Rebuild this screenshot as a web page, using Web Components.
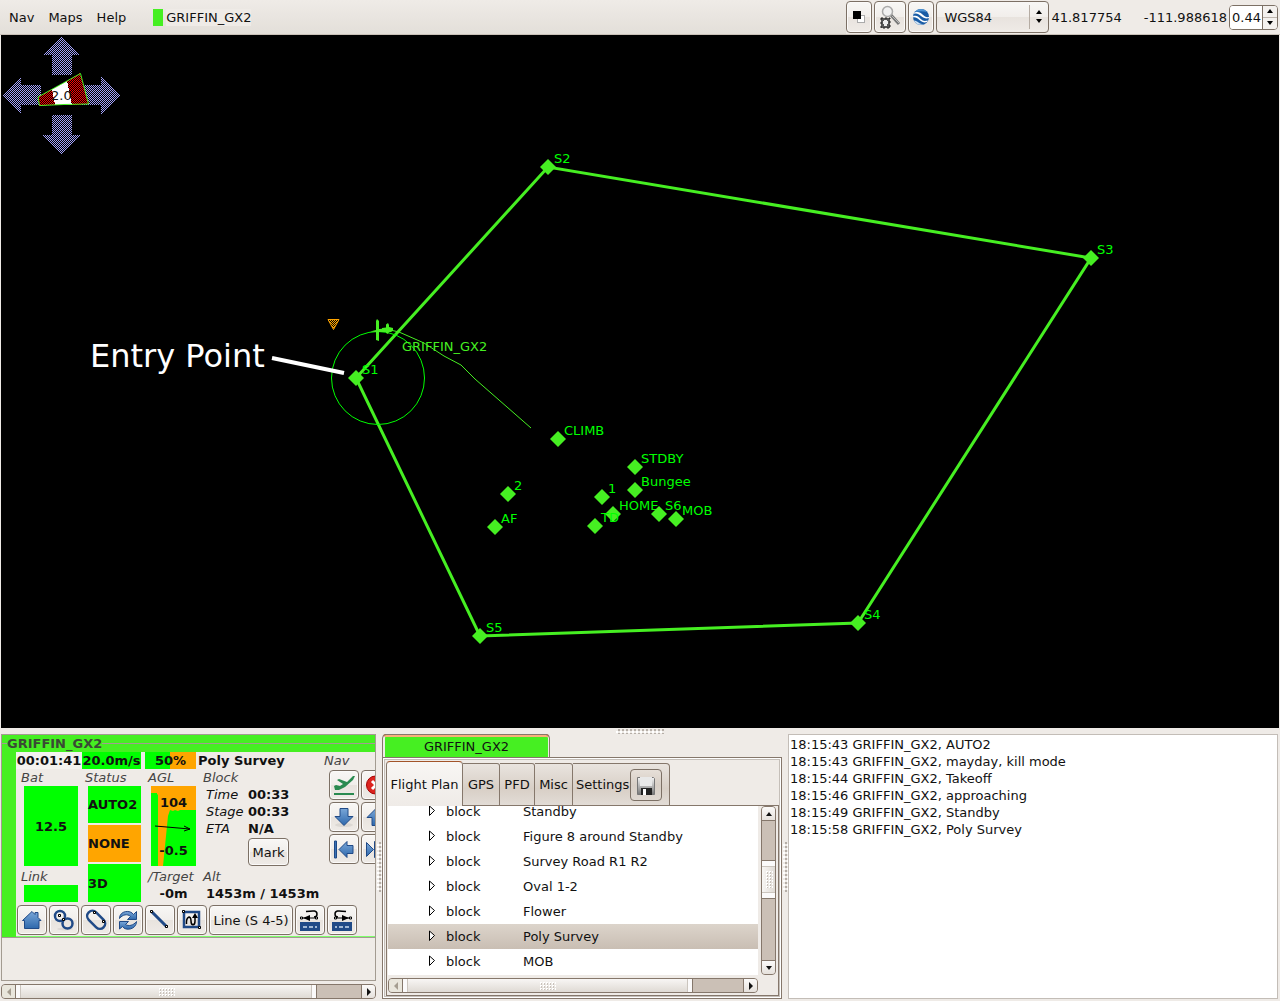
<!DOCTYPE html>
<html lang="en">
<head>
<meta charset="utf-8">
<title>GCS</title>
<style>
html,body{margin:0;height:100%}
body{background:#efebe7;color:#111;font:13px/17px "DejaVu Sans",sans-serif}
</style>
</head>
<body>
<gcs-app></gcs-app>
<script>
const define = (name, html, setup) => customElements.define(name, class extends HTMLElement {
  connectedCallback() {
    if (this.shadowRoot) return;
    const t = document.createElement('template');
    t.innerHTML = html;
    this.attachShadow({mode: 'open'}).append(t.content.cloneNode(true));
    if (setup) setup(this, this.shadowRoot);
  }
});

/* ---------- icons ---------- */
const grad = '<defs><linearGradient id="b" x1="0" y1="0" x2="0" y2="1"><stop offset="0" stop-color="#7aa7d8"/><stop offset="1" stop-color="#2e68ac"/></linearGradient><linearGradient id="m" x1="0" y1="0" x2="0" y2="1"><stop offset="0" stop-color="#f4f4f4"/><stop offset="1" stop-color="#777"/></linearGradient></defs>';
const icons = {
  editor: '<rect x="10.500" y="10.500" width="7" height="7" fill="#fff" stroke="#aaa"/><rect x="6" y="6" width="8" height="8"/>',
  search: '<path d="M13 10l8 9" stroke="#777" stroke-width="3"/><path d="M14 11l7 7" stroke="#bbb"/><circle cx="9.500" cy="6.500" r="5" fill="#f1f1f1" stroke="#aaa" stroke-width="1.500"/><path d="M3 13h9v10h-9z" fill="#555"/><path d="M6 15h3v1h1v3h-1v2h-3v-2h-1v-3h1z" fill="#eee"/><path d="M3 13h9v10h-9z" fill="none" stroke="#222" stroke-dasharray="2 2"/>',
  earth: '<circle cx="12" cy="12" r="8" fill="#1a5ca5"/><path d="M6 7c3-4 9-4 12 0-4-1-8-1-12 0z" fill="#4f94d4"/><path d="M5.500 7.500c4-1 6 0 8 2s4 3 6.500 2.500v1c-3 1-5.500 0-8-2s-4-3-7.500-2z" fill="#fff"/><path d="M4.200 11c4-1 5.500 1 7.500 3s4 2.500 7 1.500l-.7 1.500c-3 1-5 0-7.500-2s-4-3-6.500-2.500z" fill="#fff"/><path d="M5 15.500c2 0 3 1 4.500 2s3 1.500 5 1.500c-4 2-8 0-9.500-3.500z" fill="#cfe3f5"/>',
  takeoff: '<path d="M2 13l2-1 4 1 3-2-6-4 2-1 8 3 6-6 2 0-2 4-8 7-6 3h-4z" fill="#2a8a50"/><path d="M2 21h20" stroke="#2a8a50" stroke-width="2"/>',
  kill: '<circle cx="11.500" cy="12" r="9" fill="#dc241f" stroke="#a40000"/><path d="M8 8l8 8M16 8l-8 8" stroke="#fff" stroke-width="3"/>',
  down: grad + '<ellipse cx="12" cy="20" rx="9" ry="2" fill="#0001"/><path d="M8 3.500h8v8h5l-9 9-9-9h5z" fill="url(#b)" stroke="#204a87"/>',
  up: grad + '<path d="M8 20.500h8v-8h5l-9-9-9 9h5z" fill="url(#b)" stroke="#204a87"/>',
  first: grad + '<path d="M2.500 4h2v17h-2z" fill="#3a72b4" stroke="#204a87"/><path d="M7 12.500l8-8v4h6v8h-6v4z" fill="url(#b)" stroke="#204a87"/>',
  last: grad + '<path d="M9.500 12.500l-7-7v14z" fill="url(#b)" stroke="#204a87"/><path d="M10.500 4.500h2v16h-2z" fill="#3a72b4" stroke="#204a87"/>',
  home: grad + '<path d="M4.500 20.500v-8h-2l9.500-9 3 3v-2h3v5l3 3h-2v8z" fill="url(#b)" stroke="#204a87"/>',
  eight: '<ellipse cx="13" cy="21" rx="8" ry="1.500" fill="#0001"/><circle cx="8" cy="8" r="5" fill="none" stroke="#204a87" stroke-width="2.500"/><circle cx="15.500" cy="15.500" r="5" fill="none" stroke="#204a87" stroke-width="2.500"/><path d="M6.500 6.500h2v2h-2zM10.500 10.500h2v2h-2z" fill="#fff" stroke="#000"/>',
  oval: '<rect x="1.500" y="6.500" width="21" height="10.500" rx="5.200" transform="rotate(45 12 12)" fill="none" stroke="#204a87" stroke-width="2.500"/><path d="M9.500 3.500h2v2h-2zM18.500 12.500h2v2h-2z" fill="#fff" stroke="#000"/>',
  turn: grad + '<path d="M3.500 10.500c0-8 11-9 14-4l3-3v8h-9l3-3c-3-3-8-2-11 2z" fill="url(#b)" stroke="#204a87"/><path d="M20.500 13.500c0 8-11 10-14 5l-3 2.500v-7.500h9l-3 3c3 2 8 1 11-3z" fill="url(#b)" stroke="#204a87"/>',
  line: '<path d="M4 4l15 15" stroke="#204a87" stroke-width="3"/><path d="M2.500 2.500h2v2h-2zM17.500 17.500h2v2h-2z" fill="#fff" stroke="#000"/>',
  survey: '<path d="M4 4h15v15h-15z" fill="none" stroke="#204a87" stroke-width="2.500"/><path d="M6.500 16c-.5-8 4.500-9 4.500-3 0 5 4 5 4 0v-4" fill="none" stroke="#000" stroke-width="1.500"/><path d="M12 10l3-5 3 5z"/><path d="M2.500 2.500h2v2h-2zM18.500 18.500h2v2h-2z" fill="#fff" stroke="#000"/>',
  left: '<path d="M2 14h20v9h-20z" fill="#204a87"/><path d="M5 19h14" stroke="#cde" stroke-width="1.500" stroke-dasharray="4 2"/><path d="M8 3.500c8-1 11-1 11 2.500 0 2-1 3-3 3" fill="none" stroke="#000" stroke-width="1.500"/><path d="M4 10h14" stroke="#000"/><path d="M12 7v6l-7-3z"/><path d="M2.500 9h2v2h-2zM17.500 9h2v2h-2z" fill="#fff" stroke="#000"/>',
  floppy: grad + '<path d="M3.500 4.500h16l1 1v16h-17z" fill="url(#m)" stroke="#777"/><path d="M6 4h12v9h-12z" fill="#e8e8e8"/><path d="M7 15h11v7h-11z" fill="#222"/><path d="M9 16h3v6h-3z" fill="#fff"/>'
};
icons.right = '<g transform="translate(24 0) scale(-1 1)">' + icons.left + '</g>';

define('tool-icon', `<style>:host{display:block;width:24px;height:24px;flex:none}svg{display:block}</style><svg width="24" height="24" viewBox="0 0 24 24"></svg>`,
  (h, r) => r.querySelector('svg').innerHTML = icons[h.getAttribute('name')] || '');

define('tool-button', `<style>
:host{display:flex;min-width:30px;height:30px;flex:none}
button{flex:1;display:flex;align-items:center;justify-content:center;min-width:0;padding:0;box-sizing:border-box;border:1px solid #7c7065;border-radius:4px;
 background:linear-gradient(#f8f7f5,#f1eeeb 50%,#e8e3de 51%,#efebe7);box-shadow:inset 0 0 0 1px #fbfaf9;font:inherit;color:inherit;white-space:nowrap}
:host([flat]) button{background:linear-gradient(#e6dfd8,#d8cfc6 50%,#dfd8d1);box-shadow:none}
</style><button><slot></slot></button>`, (h, r) => {
  const n = h.getAttribute('icon');
  if (n) { r.querySelector('button').innerHTML = `<tool-icon name="${n}"></tool-icon>`; r.querySelector('button').setAttribute('aria-label', n); }
});

define('dot-grip', `<style>:host{display:block;width:48px;height:5px;flex:none;background:conic-gradient(#b5aea7 25%,#fff0 0 50%,#fff 0 75%,#fff0 0) 0 0/4px 4px}
:host([vertical]){width:5px;height:50px}:host([small]){width:17px;height:8px;background:conic-gradient(#fff 25%,#c9c2bb 0 50%,#fff0 0) 0 0/3px 3px}
:host([small][vertical]){width:8px;height:17px}</style>`);

define('scroll-bar', `<style>
:host{display:flex;height:15px;box-sizing:border-box;border:1px solid #85776b;border-radius:4px;background:#cbc0b6;overflow:hidden;flex:none}
:host([vertical]){flex-direction:column;height:auto;width:15px}
button{flex:none;width:14px;height:100%;border:0;border-right:1px solid #85776b;padding:0;background:linear-gradient(#fbfaf9,#e6e1dc);color:#111;display:grid;place-items:center}
button.e{border-right:0;border-left:1px solid #85776b}
:host([vertical]) button{width:100%;height:14px;border:0;border-bottom:1px solid #85776b}
:host([vertical]) button.e{border:0;border-top:1px solid #85776b}
:host(:not([vertical])) button:not(.e){background:#e9e6dc;color:#a59d90}
.t{display:grid;place-items:center;background:linear-gradient(#f8f6f4,#dfdad4);border-right:1px solid #85776b;box-shadow:inset 4px 0 #fbfafa,inset 5px 0 #cbc5be,inset -4px 0 #fbfafa,inset -5px 0 #cbc5be}
:host([vertical]) .t{background:linear-gradient(90deg,#f8f6f4,#dfdad4);border:solid #85776b;border-width:1px 0;box-shadow:inset 0 5px #fbfafa,inset 0 6px #cbc5be,inset 0 -5px #fbfafa,inset 0 -6px #cbc5be}
svg{display:block;fill:currentColor}
</style><button aria-label="back"><svg width="8" height="8"></svg></button><div class="a"></div><div class="t"><dot-grip small></dot-grip></div><div class="b"></div><button class="e" aria-label="forward"><svg width="8" height="8"></svg></button>`, (h, r) => {
  const v = h.hasAttribute('vertical');
  const p = v ? ['M1 6l3-4 3 4z', 'M1 2l3 4 3-4z'] : ['M6 0l-4 4 4 4z', 'M2 0l4 4-4 4z'];
  r.querySelectorAll('svg').forEach((s, i) => s.innerHTML = `<path d="${p[i]}"/>`);
  if (v) r.querySelector('dot-grip').setAttribute('vertical', '');
  const [a, t, b] = h.getAttribute('parts').split(' ');
  r.querySelector('.a').style.flex = a + ' 1 0'; r.querySelector('.t').style.flex = t + ' 1 0'; r.querySelector('.b').style.flex = b + ' 1 0';
});

/* ---------- menu bar ---------- */
define('menu-bar', `<style>
:host{display:flex;height:35px;box-sizing:border-box;background:linear-gradient(#efebe7,#e3dfd9);border-bottom:1px solid #c9c1b8;align-items:center;white-space:nowrap}
nav{display:flex;gap:14px;padding-left:9px;flex:1;align-items:center}
a{color:inherit;text-decoration:none}
.ac{display:flex;align-items:center;gap:3px;margin-left:13px}.ac i{width:10px;height:17px;background:#46ef22}
.ac span{background:#efebe7}
.tools{display:flex;align-items:center;align-self:stretch;background:#efebe7;gap:2px;padding-right:2px}
tool-button{height:32px}.n{min-width:26px}.w{min-width:32px}
label{display:grid;width:113px;height:32px;align-items:center}
label>*{grid-area:1/1}
select{appearance:none;width:100%;height:32px;border:1px solid #7c7065;border-radius:4px;background:linear-gradient(#f8f7f5,#f1eeeb 50%,#e8e3de 51%,#efebe7);padding:0 7px;font:inherit;color:inherit}
label svg{justify-self:end;pointer-events:none}
.c{display:flex;gap:22px}
.spin{display:flex;width:49px;height:25px;box-sizing:border-box;border:1px solid #7c7065;border-radius:4px;overflow:hidden;background:#fff}
.spin input{flex:1;min-width:0;border:0;padding:0 0 0 2px;font:inherit;color:inherit;background:#fff}
.spin div{width:14px;display:flex;flex-direction:column;border-left:1px solid #7c7065;background:#f4f1ee}
.spin button{flex:1;border:0;padding:0;background:none;display:grid;place-items:center}.spin button+button{border-top:1px solid #bdb5ad}
</style>
<nav><a href="#nav">Nav</a><a href="#maps">Maps</a><a href="#help">Help</a><div class="ac"><i></i><span>GRIFFIN_GX2</span></div></nav>
<div class="tools"><tool-button class="n" icon="editor"></tool-button><tool-button class="w" icon="search"></tool-button><tool-button class="n" icon="earth"></tool-button>
<label><select aria-label="Datum"><option>WGS84</option></select><svg width="20" height="24"><path d="M.5 0v24" stroke="#b5aca3"/><path d="M7 9l3-4 3 4zM7 14l3 4 3-4z"/></svg></label>
<div class="c"><span>41.817754</span><span>-111.988618</span></div>
<div class="spin"><input aria-label="Zoom" value="0.44"><div><button aria-label="more"><svg width="8" height="5"><path d="M1 4l3-4 3 4z"/></svg></button><button aria-label="less"><svg width="8" height="5"><path d="M1 0l3 4 3-4z"/></svg></button></div></div></div>`);

/* ---------- map ---------- */
define('way-point', `<style>:host{position:absolute;display:block;color:#0f0;white-space:nowrap}
svg{position:absolute;left:-8px;top:-8px}span{position:absolute;left:6px;top:-17px}</style>
<svg width="16" height="16"><path d="M8 0l8 8-8 8-8-8z" fill="#46ef22"/></svg><span><slot></slot></span>`, h => {
  h.style.left = h.getAttribute('x') + 'px'; h.style.top = h.getAttribute('y') + 'px';
});
define('map-canvas', `<style>:host{display:block;position:relative;flex:1;min-height:0;margin:0 1px;background:#000;overflow:hidden}
svg.m{position:absolute;left:0;top:0;width:100%;height:100%}</style>
<svg class="m" font-size="13"><defs>
<pattern id="blue" width="2" height="2" patternUnits="userSpaceOnUse"><path d="M0 0h1v1h-1zM1 1h1v1h-1z" fill="#a0a0f8"/></pattern>
<pattern id="red" width="2" height="2" patternUnits="userSpaceOnUse"><path d="M0 0h2v2h-2z" fill="#000"/><path d="M0 0h1v1h-1zM1 1h1v1h-1z" fill="#f00"/></pattern>
<pattern id="org" width="2" height="2" patternUnits="userSpaceOnUse"><path d="M0 0h1v1h-1zM1 1h1v1h-1z" fill="#ffa500"/></pattern></defs>
<g transform="translate(-1 -35)">
<g fill="url(#blue)" shape-rendering="crispEdges"><path d="M61.500 36l19 19h-9v20h-20v-20h-9z"/><path d="M61.500 155l20-20h-10v-20h-20v20h-10z"/><path d="M2 95l19-19v9h20v20h-20v9z"/><path d="M121 95l-20-19v9h-20v20h20v10z"/></g>
<g shape-rendering="crispEdges"><path d="M38 97L80 73L89 104L39 106z" fill="#000"/><path d="M38 97L52 89L55 105L39 106zM67 81L80 73L89 104L72 105z" fill="url(#red)"/><path d="M52 89L67 81L72 105L55 105z" fill="#fff"/></g>
<path d="M38 97L80.500 73.500L88.500 104L64 104.500L39.500 105.500z" fill="none" stroke="#46ef22"/><text x="51" y="100" fill="#111">2.0</text>
<path d="M328 319.500h11l-5.500 10z" fill="url(#org)" stroke="#ffa500"/>
<path d="M356 378L548 167L1091 258L858 623L480 636z" fill="none" stroke="#46ef22" stroke-width="3"/>
<circle cx="378" cy="378" r="46.500" fill="none" stroke="#0f0"/>
<path d="M386 329L399 332L424 343L444 356L461 365L475 379L531 428" fill="none" stroke="#46ef22"/>
<path d="M370 331.500l6-1.500v-9l1-2 2 2v8l12-1 2 2-2 2h-12v9l-3-1v-8z" fill="#46ef22"/><path d="M382 328l4-.5v-3l2-1.500 1 2v2l4 1v3l-4 1-1 2-2-1v-3l-4-.5z" fill="#46ef22"/>
<text x="402" y="351" fill="#46ef22">GRIFFIN_GX2</text>
<text x="90" y="367" fill="#fff" font-size="32">Entry Point</text><path d="M272 358L344 373" stroke="#fff" stroke-width="4"/></g></svg>
<way-point x="355" y="343">S1</way-point><way-point x="547" y="132">S2</way-point><way-point x="1090" y="223">S3</way-point><way-point x="857" y="588">S4</way-point><way-point x="479" y="601">S5</way-point>
<way-point x="557" y="404">CLIMB</way-point><way-point x="634" y="432">STDBY</way-point><way-point x="634" y="455">Bungee</way-point><way-point x="601" y="462">1</way-point><way-point x="612" y="479">HOME</way-point><way-point x="594" y="491">TD</way-point><way-point x="658" y="479">S6</way-point><way-point x="675" y="484">MOB</way-point><way-point x="507" y="459">2</way-point><way-point x="494" y="492">AF</way-point>`);

/* ---------- aircraft strip ---------- */
define('strip-panel', `<style>
:host{display:flex;flex-direction:column;width:375px;box-sizing:border-box;flex:none;gap:3px}
.frame{flex:1;border:1px solid #a39b91;overflow:hidden;box-sizing:border-box}
.green{background:#46ef22;padding-left:14px;border-bottom:1px solid #a39b91}
.title{display:flex;align-items:center;height:17px;margin-left:-14px;font-weight:bold;color:#3a4a35}
.title:before,.title:after{content:"";height:1px;width:5px;background:#a39b91}.title:after{flex:1}
.in{background:#efebe7;border-bottom:1px solid #7dff6a;white-space:nowrap}
.up{display:flex}.left{width:308px;flex:none}
.r1{display:flex;font-weight:bold}.r1>*{height:17px;text-align:center}
.time{width:66px;background:#f4f2ef}.sp{width:59px;background:#0f0;margin-right:4px}.th{width:51px;background:linear-gradient(90deg,#0f0 49%,#ffa500 0);margin-right:2px}
.cols{display:flex;gap:2px}
.col{display:flex;flex-direction:column;height:133px}
i{color:#444;padding-left:5px;display:block}
.box{background:#0f0;margin-left:8px;font-weight:bold;display:flex;align-items:center}
.big{height:80px;margin-bottom:2px}.low{height:17px;font-weight:bold}
.c{justify-content:center;text-align:center}
.st{flex:1;display:flex;flex-direction:column;gap:2px}.st .box{height:37px}.st .box:last-child{flex:1}.o{background:#ffa500}
.agl{display:grid;background:#ffa500}.agl svg{grid-area:1/1}.agl div{grid-area:1/1;align-self:stretch;display:flex;flex-direction:column;justify-content:space-between;padding:8px 0 7px;box-sizing:border-box;text-align:center}
dl{display:grid;grid-template-columns:42px auto;margin:0;padding-left:8px}dt{font-style:italic}dd{margin:0;font-weight:bold}
.mark{display:flex;padding-left:50px;height:29px;margin-bottom:2px;align-items:flex-end}.mark tool-button{width:41px;height:28px}
.nav .g{display:grid;grid-template-columns:30px 30px;gap:2px;padding:1px 0 0 5px}.nav i{padding:0}
.bar{display:flex;gap:2px;padding:3px 0 1px 1px}.bar .line{width:84px}
</style>
<div class="frame"><div class="green"><div class="title">GRIFFIN_GX2</div><div class="in"><div class="up"><div class="left">
<div class="r1"><span class="time">00:01:41</span><span class="sp">20.0m/s</span><span class="th">50%</span><span>Poly Survey</span></div>
<div class="cols">
<div class="col" style="width:62px"><i>Bat</i><div class="box big c">12.5</div><i>Link</i><div class="box low"></div></div>
<div class="col" style="width:61px"><i>Status</i><div class="st"><div class="box">AUTO2</div><div class="box o">NONE</div><div class="box">3D</div></div></div>
<div class="col" style="width:53px"><i>AGL</i><div class="box big agl"><svg width="45" height="80"><path d="M0 7h6v1l1 1v71h-7zM12 80l2-20 2-20 1-10 2-6 3 1 2-1 3 1 2-1h16v56z" fill="#0f0"/><path d="M4 40l35 3M33 40l6 3-6 2" fill="none" stroke="#000"/></svg><div><span>104</span><span>-0.5</span></div></div><i>/Target</i><div class="low" style="padding-left:8px;text-align:center">-0m</div></div>
<div class="col"><i>Block</i><dl><dt>Time</dt><dd>00:33</dd><dt>Stage</dt><dd>00:33</dd><dt>ETA</dt><dd>N/A</dd></dl><div class="mark"><tool-button>Mark</tool-button></div><i>Alt</i><div class="low" style="padding-left:8px">1453m / 1453m</div></div>
</div></div>
<div class="nav"><i>Nav</i><div class="g"><tool-button icon="takeoff"></tool-button><tool-button icon="kill"></tool-button><tool-button icon="down"></tool-button><tool-button icon="up"></tool-button><tool-button icon="first"></tool-button><tool-button icon="last"></tool-button></div></div></div>
<div class="bar"><tool-button icon="home"></tool-button><tool-button icon="eight"></tool-button><tool-button icon="oval"></tool-button><tool-button icon="turn"></tool-button><tool-button icon="line"></tool-button><tool-button icon="survey"></tool-button><tool-button class="line">Line (S 4-5)</tool-button><tool-button icon="left"></tool-button><tool-button icon="right"></tool-button></div>
</div></div></div>
<scroll-bar parts="0 301 44"></scroll-bar>`);

/* ---------- notebook ---------- */
define('note-book', `<style>
:host{display:flex;flex-direction:column;width:400px;flex:none}
.t{align-self:flex-start;width:163px;text-align:center;background:#46ef22;border:solid #efebe7;border-width:2px 1px 0 2px;outline:1px solid #85776b;height:20px;line-height:19px;margin:1px 0 0 1px;border-top-color:#f8b07a;border-radius:3px 3px 0 0;box-shadow:0 -1px #b5561c;clip-path:inset(-1px -1px 0 -1px)}
.o{flex:1;border:1px solid #85776b;padding:2px;display:flex;box-shadow:inset 0 0 0 1px #fff,inset 0 0 0 2px #c5bfb9;min-height:0}
.i{flex:1;display:flex;flex-direction:column;padding:1px 0 0 1px;min-width:0}
.tabs{display:flex;align-items:flex-end;height:45px;white-space:nowrap}
.tabs button{font:inherit;color:inherit;height:43px;margin:0;padding:0;border:1px solid #85776b;border-left:0;background:linear-gradient(#e9e4df,#d8cfc6 60%,#e2dcd6);border-top-right-radius:3px;flex:none}
.tabs button.on{height:45px;background:linear-gradient(#f8f6f4,#efebe7);border-top-color:#a2542a;border-bottom:0;border-left:1px solid #85776b;border-radius:4px 4px 0 0;width:77px}
.s{display:flex;align-items:center;width:97px;height:43px;box-sizing:border-box;border:1px solid #85776b;border-left:0;background:linear-gradient(#e9e4df,#d8cfc6 60%,#e2dcd6);border-top-right-radius:4px;padding-left:3px;gap:1px}
.tabs .s button{all:unset}.s tool-button{height:32px;min-width:32px}
.tabs:after{content:"";flex:1;border-bottom:1px solid #85776b}
.body{flex:1;min-height:0;display:grid;grid-template-columns:1fr 15px;grid-template-rows:1fr 15px;gap:3px;padding:0 2px 2px 1px;border-right:1px solid #85776b;border-bottom:1px solid #85776b;border-left:1px solid #85776b}
.list{background:#fff;overflow:hidden;display:flex;flex-direction:column;justify-content:flex-end;padding-bottom:1px;min-height:0}
table{border-collapse:collapse;width:100%;flex:none}td{padding:0;height:25px}td:first-child{width:58px;text-align:right}td:nth-child(2){width:77px}
td svg{display:block;margin:0 10px 0 auto}
tr.sel{background:linear-gradient(#dcd4cb,#c9beb3)}
</style>
<div class="t">GRIFFIN_GX2</div><div class="o"><div class="i"><div class="tabs"><button class="on">Flight Plan</button><button style="width:37px">GPS</button><button style="width:35px">PFD</button><button style="width:38px">Misc</button><div class="s"><button>Settings</button><tool-button flat icon="floppy"></tool-button></div></div>
<div class="body"><div class="list"><table></table></div><scroll-bar vertical parts="40 38 62"></scroll-bar><scroll-bar parts="0 291 50"></scroll-bar></div></div></div>`, (h, r) => {
  r.querySelector('table').innerHTML = ['Standby', 'Figure 8 around Standby', 'Survey Road R1 R2', 'Oval 1-2', 'Flower', 'Poly Survey', 'MOB']
    .map(n => `<tr${n === 'Poly Survey' ? ' class="sel"' : ''}><td><svg width="8" height="13"><path d="M1.500 1v9.500l5-5z" fill="#fff" stroke="#000"/></svg></td><td>block</td><td>${n}</td></tr>`).join('');
});

define('event-log', `<style>:host{display:block;flex:1;background:#fff;border:1px solid #c3bdb7;padding:1px;margin:0 1px 0 0}p{margin:0}</style>
<p>18:15:43 GRIFFIN_GX2, AUTO2</p><p>18:15:43 GRIFFIN_GX2, mayday, kill mode</p><p>18:15:44 GRIFFIN_GX2, Takeoff</p><p>18:15:46 GRIFFIN_GX2, approaching</p><p>18:15:49 GRIFFIN_GX2, Standby</p><p>18:15:58 GRIFFIN_GX2, Poly Survey</p>`);

define('gcs-app', `<style>
:host{display:flex;flex-direction:column;height:100vh;overflow:hidden}
.h{display:flex;justify-content:center;height:6px;align-items:center}
.b{display:flex;height:265px;padding:0 1px 2px;flex:none;box-sizing:content-box}
.v{width:6px;display:flex;align-items:center;justify-content:center;flex:none}
</style><menu-bar></menu-bar><map-canvas></map-canvas><div class="h"><dot-grip></dot-grip></div>
<div class="b"><strip-panel></strip-panel><div class="v"><dot-grip vertical></dot-grip></div><note-book></note-book><div class="v"><dot-grip vertical></dot-grip></div><event-log></event-log></div>`);
</script>
</body>
</html>
